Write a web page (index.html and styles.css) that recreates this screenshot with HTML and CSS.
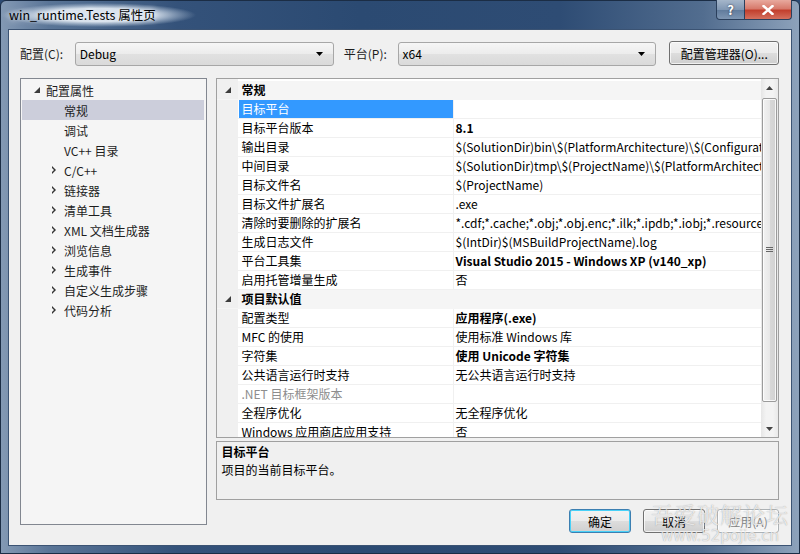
FILE: index.html
```html
<!DOCTYPE html>
<html lang="zh-CN">
<head>
    <meta charset="UTF-8">
    <title>win_runtime.Tests 属性页</title>
    <link rel="stylesheet" href="styles.css">
</head>
<body>
    <div class="window">
        <div class="titlebar">
            <span class="title">win_runtime.Tests 属性页</span>
            <div class="caption-buttons">
                <div class="cap cap-help">?</div>
                <div class="cap cap-close">
                    <svg width="12" height="10" viewBox="0 0 12 10"><path d="M1.5 1L10.5 9M10.5 1L1.5 9" stroke="#fff" stroke-width="2.4" stroke-linecap="square"/></svg>
                </div>
            </div>
        </div>

        <div class="client">
            <div class="toolbar">
                <span class="tb-label label-config">配置(C):</span>
                <div class="combo">
                    <span>Debug</span>
                    <svg width="7" height="4" viewBox="0 0 7 4"><path d="M0 0H7L3.5 4Z" fill="#000"/></svg>
                </div>
                <span class="tb-label label-platform">平台(P):</span>
                <div class="combo">
                    <span>x64</span>
                    <svg width="7" height="4" viewBox="0 0 7 4"><path d="M0 0H7L3.5 4Z" fill="#000"/></svg>
                </div>
                <button class="btn btn-manager">配置管理器(O)...</button>
            </div>

            <div class="main">
                <div class="tree">
                    <div class="tree-item level0">
                        <span class="exp"><svg width="6" height="6" viewBox="0 0 6 6"><path d="M6 0V6H0Z" fill="#3c3c3c"/></svg></span>
                        <span>配置属性</span>
                    </div>
                    <div class="tree-item level1 selected"><span class="exp"></span><span>常规</span></div>
                    <div class="tree-item level1"><span class="exp"></span><span>调试</span></div>
                    <div class="tree-item level1"><span class="exp"></span><span>VC++ 目录</span></div>
                    <div class="tree-item level1"><span class="exp closed"></span><span>C/C++</span></div>
                    <div class="tree-item level1"><span class="exp closed"></span><span>链接器</span></div>
                    <div class="tree-item level1"><span class="exp closed"></span><span>清单工具</span></div>
                    <div class="tree-item level1"><span class="exp closed"></span><span>XML 文档生成器</span></div>
                    <div class="tree-item level1"><span class="exp closed"></span><span>浏览信息</span></div>
                    <div class="tree-item level1"><span class="exp closed"></span><span>生成事件</span></div>
                    <div class="tree-item level1"><span class="exp closed"></span><span>自定义生成步骤</span></div>
                    <div class="tree-item level1"><span class="exp closed"></span><span>代码分析</span></div>
                </div>

                <div class="right">
                    <div class="grid">
                        <div class="rows">
                            <div class="row cat-row">
                                <span class="cat"><svg width="6" height="6" viewBox="0 0 6 6"><path d="M6 0V6H0Z" fill="#3c3c3c"/></svg></span>
                                <span class="cat-name">常规</span>
                            </div>
                            <div class="row"><span class="cat"></span><span class="name sel">目标平台</span><span class="value"></span></div>
                            <div class="row"><span class="cat"></span><span class="name">目标平台版本</span><span class="value bold">8.1</span></div>
                            <div class="row"><span class="cat"></span><span class="name">输出目录</span><span class="value">$(SolutionDir)bin\$(PlatformArchitecture)\$(Configuration)\</span></div>
                            <div class="row"><span class="cat"></span><span class="name">中间目录</span><span class="value">$(SolutionDir)tmp\$(ProjectName)\$(PlatformArchitecture)\</span></div>
                            <div class="row"><span class="cat"></span><span class="name">目标文件名</span><span class="value">$(ProjectName)</span></div>
                            <div class="row"><span class="cat"></span><span class="name">目标文件扩展名</span><span class="value">.exe</span></div>
                            <div class="row"><span class="cat"></span><span class="name">清除时要删除的扩展名</span><span class="value">*.cdf;*.cache;*.obj;*.obj.enc;*.ilk;*.ipdb;*.iobj;*.resources</span></div>
                            <div class="row"><span class="cat"></span><span class="name">生成日志文件</span><span class="value">$(IntDir)$(MSBuildProjectName).log</span></div>
                            <div class="row"><span class="cat"></span><span class="name">平台工具集</span><span class="value bold">Visual Studio 2015 - Windows XP (v140_xp)</span></div>
                            <div class="row"><span class="cat"></span><span class="name">启用托管增量生成</span><span class="value">否</span></div>
                            <div class="row cat-row">
                                <span class="cat"><svg width="6" height="6" viewBox="0 0 6 6"><path d="M6 0V6H0Z" fill="#3c3c3c"/></svg></span>
                                <span class="cat-name">项目默认值</span>
                            </div>
                            <div class="row"><span class="cat"></span><span class="name">配置类型</span><span class="value bold">应用程序(.exe)</span></div>
                            <div class="row"><span class="cat"></span><span class="name">MFC 的使用</span><span class="value">使用标准 Windows 库</span></div>
                            <div class="row"><span class="cat"></span><span class="name">字符集</span><span class="value bold">使用 Unicode 字符集</span></div>
                            <div class="row"><span class="cat"></span><span class="name">公共语言运行时支持</span><span class="value">无公共语言运行时支持</span></div>
                            <div class="row"><span class="cat"></span><span class="name disabled">.NET 目标框架版本</span><span class="value"></span></div>
                            <div class="row"><span class="cat"></span><span class="name">全程序优化</span><span class="value">无全程序优化</span></div>
                            <div class="row"><span class="cat"></span><span class="name">Windows 应用商店应用支持</span><span class="value">否</span></div>
                        </div>
                        <div class="scrollbar">
                            <div class="sb-arrow"><svg width="7" height="4" viewBox="0 0 7 4"><path d="M3.5 0L7 4H0Z" fill="#444"/></svg></div>
                            <div class="sb-track">
                                <div class="sb-thumb">
                                    <svg width="7" height="6" viewBox="0 0 7 6"><path d="M0 0.5H7M0 2.5H7M0 4.5H7" stroke="#666" stroke-width="1"/></svg>
                                </div>
                            </div>
                            <div class="sb-arrow"><svg width="7" height="4" viewBox="0 0 7 4"><path d="M0 0H7L3.5 4Z" fill="#444"/></svg></div>
                        </div>
                    </div>

                    <div class="desc">
                        <div class="desc-title">目标平台</div>
                        <div class="desc-text">项目的当前目标平台。</div>
                    </div>

                    <div class="actions">
                        <button class="btn btn-default">确定</button>
                        <button class="btn">取消</button>
                        <button class="btn btn-disabled">应用(A)</button>
                    </div>
                </div>
            </div>
        </div>

        <div class="watermark">
            <div class="wm-big">吾爱破解论坛</div>
            <div class="wm-small">www.52pojie.cn</div>
        </div>
    </div>
</body>
</html>
```

FILE: styles.css
```css
* {
    margin: 0;
    padding: 0;
    box-sizing: border-box;
}

body {
    width: 800px;
    height: 554px;
    overflow: hidden;
    font-family: "Noto Sans CJK SC", "Noto Sans", sans-serif;
    font-size: 12px;
    color: #000;
    background: #2c4a72;
}

.window {
    position: relative;
    width: 800px;
    height: 554px;
    display: flex;
    flex-direction: column;
    padding: 0 7px 7px 7px;
    background: linear-gradient(90deg, #8399b4 0%, #5a7597 6%, #34527a 22%, #2b4a72 45%, #2e4c74 70%, #526d8f 88%, #8da2bb 100%);
    border: 1px solid #1b2d45;
    border-radius: 6px 6px 0 0;
}

/* title bar */

.titlebar {
    height: 28px;
    display: flex;
    align-items: flex-start;
    justify-content: space-between;
}

.title {
    margin: 2px 0 0 -7px;
    padding: 3px 40px 3px 8px;
    line-height: 18px;
    font-size: 12.5px;
    background: radial-gradient(closest-side, rgba(222, 231, 241, 0.95) 55%, rgba(200, 214, 230, 0.5) 78%, rgba(180, 198, 220, 0) 100%);
    text-shadow: 0 0 6px #fff;
}

.caption-buttons {
    display: flex;
    margin-top: -1px;
}

.cap {
    height: 20px;
    display: flex;
    align-items: center;
    justify-content: center;
    border: 1px solid #2a3f5c;
    border-top: none;
    color: #fff;
    font-weight: bold;
    font-size: 13px;
    text-shadow: 0 0 2px #223;
}

.cap-help {
    width: 29px;
    border-radius: 0 0 0 4px;
    background: linear-gradient(#a5b6ca, #8097b3 50%, #5f7a9b 51%, #7e96b3);
}

.cap-close {
    width: 47px;
    border-left: none;
    border-radius: 0 0 4px 0;
    background: linear-gradient(#e8a99e, #d77a6c 45%, #c2402e 55%, #d4705e);
}

/* client area */

.client {
    flex: 1;
    background: #f0f0f0;
    border: 1px solid #3b5373;
    padding: 11px 12px 0 11px;
}

.toolbar {
    display: flex;
    align-items: center;
    height: 25px;
}

.tb-label {
    color: #1e1e1e;
}

.label-config {
    width: 55px;
}

.label-platform {
    width: 54px;
    margin-left: 10px;
}

.combo {
    width: 260px;
    height: 24px;
    display: flex;
    align-items: center;
    justify-content: space-between;
    padding: 0 10px 0 4px;
    border: 1px solid #a7a7a7;
    border-radius: 3px;
    background: linear-gradient(#f6f6f6, #ececec 50%, #e1e1e1 51%, #dadada);
}

.btn {
    font-family: inherit;
    font-size: 12px;
    color: #000;
    height: 24px;
    border: 1px solid #707070;
    border-radius: 3px;
    background: linear-gradient(#f2f2f2, #ebebeb 50%, #dddddd 51%, #cfcfcf);
    box-shadow: inset 0 0 0 1px rgba(255, 255, 255, 0.7);
}

.btn-manager {
    width: 110px;
    margin-left: 13px;
    margin-top: -1px;
}

.main {
    display: flex;
    align-items: flex-start;
    margin-top: 12px;
}

/* tree */

.tree {
    width: 187px;
    height: 447px;
    border: 1px solid #828790;
    background: #f5f5f5;
    padding-top: 1px;
}

.tree-item {
    height: 20px;
    display: flex;
    align-items: center;
    color: #1e1e1e;
}

.tree-item.level0 {
    padding-left: 13px;
}

.tree-item.level1 {
    padding-left: 30px;
}

.tree-item.selected {
    background: #cccedb;
    margin: 0 2px 0 1px;
    padding-left: 29px;
}

.exp {
    display: flex;
    align-items: center;
    width: 12px;
    height: 20px;
}

.level1 .exp {
    width: 13px;
}

.exp.closed::before {
    content: "";
    width: 0;
    height: 0;
    border-top: 4px solid transparent;
    border-bottom: 4px solid transparent;
    border-left: 4px solid #333;
    margin-left: 1px;
}

.exp.closed::after {
    content: "";
    position: relative;
    left: -4px;
    width: 0;
    height: 0;
    border-top: 2px solid transparent;
    border-bottom: 2px solid transparent;
    border-left: 2px solid #f5f5f5;
}

/* property grid */

.right {
    width: 565px;
    margin-left: 9px;
    display: flex;
    flex-direction: column;
}

.grid {
    height: 360px;
    display: flex;
    border: 1px solid #a0a0a0;
    background: #fff;
    overflow: hidden;
}

.rows {
    flex: 1;
    padding-top: 2px;
    overflow: hidden;
    background: linear-gradient(90deg, #f0f0f0 21px, #fff 21px);
}

.row {
    height: 19px;
    display: grid;
    grid-template-columns: 21px 215px 1fr;
    border-bottom: 1px solid #f0f0f0;
    line-height: 18px;
}

.cat {
    display: flex;
    align-items: center;
    padding-left: 8px;
    background: #f0f0f0;
}

.cat-row {
    background: #f5f5f5;
    border-bottom-color: #f5f5f5;
}

.cat-name {
    grid-column: 2 / 4;
    font-weight: bold;
    padding-left: 4px;
}

.name {
    padding-left: 4px;
    white-space: nowrap;
    overflow: hidden;
}

.name.sel {
    background: #3399ff;
    color: #fff;
    margin-left: 1px;
    padding-left: 3px;
}

.name.disabled {
    color: #8d8d8d;
}

.value {
    padding-left: 2px;
    border-left: 1px solid #f0f0f0;
    white-space: nowrap;
    overflow: hidden;
}

.bold {
    font-weight: bold;
}

.scrollbar {
    width: 17px;
    display: flex;
    flex-direction: column;
    background: linear-gradient(90deg, #e6e6e6, #f3f3f3 30%, #f3f3f3 70%, #e9e9e9);
}

.sb-arrow {
    height: 17px;
    display: flex;
    align-items: center;
    justify-content: center;
}

.sb-track {
    flex: 1;
    padding: 2px 0 18px 0;
    display: flex;
}

.sb-thumb {
    flex: 1;
    margin: 0 1px;
    display: flex;
    align-items: center;
    justify-content: center;
    border: 1px solid #9b9b9b;
    border-radius: 2px;
    background: linear-gradient(90deg, #f2f2f2, #e8e8e8 50%, #d8d8d8 51%, #d2d2d2);
    box-shadow: inset 0 0 0 1px rgba(255, 255, 255, 0.8);
}

/* description */

.desc {
    height: 59px;
    margin-top: 3px;
    border: 1px solid #a0a0a0;
    padding: 1px 5px;
    line-height: 18px;
}

.desc-title {
    font-weight: bold;
}

.actions {
    display: flex;
    justify-content: flex-end;
    gap: 12px;
    margin-top: 9px;
}

.actions .btn {
    width: 62px;
}

.btn-default {
    border-color: #3c7fb1;
    box-shadow: inset 0 0 0 1px #48d1f8;
}

.btn-disabled {
    color: #838383;
    border-color: #adb2b5;
    background: #f4f4f4;
}

/* overlay */

.watermark {
    position: absolute;
    right: 10px;
    bottom: 8px;
    color: rgba(255, 255, 255, 0.75);
    text-shadow: 0 0 1px rgba(90, 90, 90, 0.6);
    text-align: center;
    pointer-events: none;
}

.wm-big {
    font-family: "Noto Serif CJK SC", "Noto Sans CJK SC", serif;
    font-size: 22px;
    letter-spacing: 1px;
    line-height: 26px;
}

.wm-small {
    font-family: "DejaVu Sans", sans-serif;
    font-size: 15px;
    line-height: 18px;
}
```
